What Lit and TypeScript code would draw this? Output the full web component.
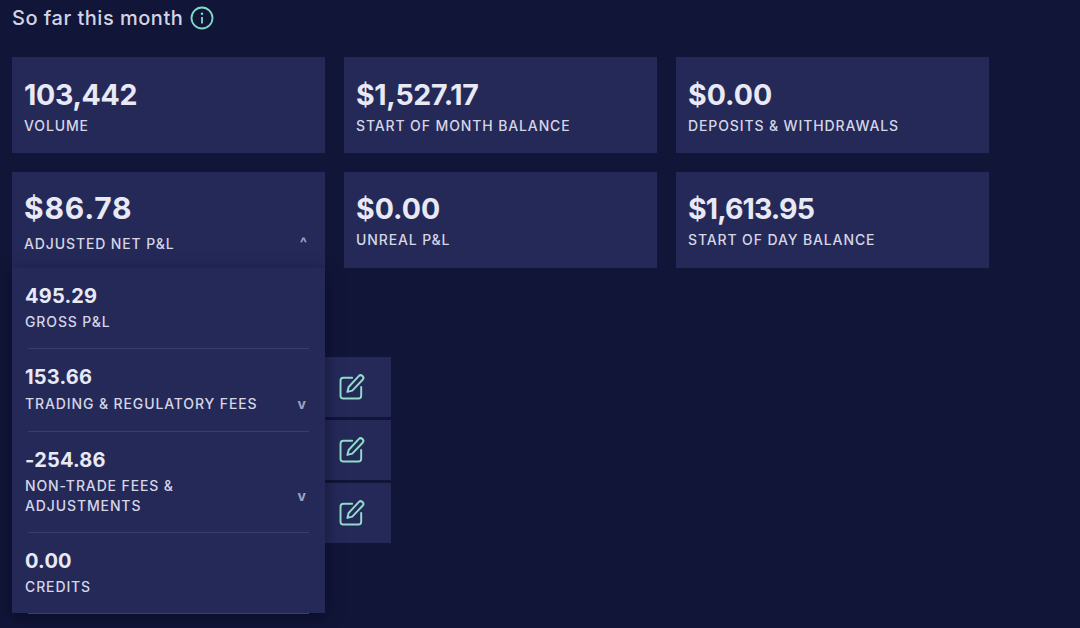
import { LitElement, html, css, svg } from "lit";
import { customElement } from "lit/decorators.js";

const editIcon = svg`<path d="M12.5 4.5H5.700a2.200 2.200 0 0 0-2.200 2.200v11.600a2.200 2.200 0 0 0 2.200 2.200h11.600a2.200 2.200 0 0 0 2.200-2.200v-6.800"/><path d="M17.600 3.200a2 2 0 0 1 3 2.800l-8 8.400-3.800 1 1-3.800z"/>`;

@customElement("app-root")
export class AppRoot extends LitElement {
  static styles = css`
    :host {
      display: block;
      width: 1080px;
      height: 628px;
      overflow: hidden;
      background: #111538;
      color: #e6e7f2;
      font-family: Inter, "Noto Sans", "Liberation Sans", sans-serif;
    }
    .page { padding: 5px 12px 0; }
    .title {
      display: flex;
      align-items: center;
      gap: 7px;
      height: 26px;
      font-size: 20px;
      letter-spacing: 0.5px;
      font-weight: 500;
      color: #d3d4e3;
    }
    .info { width: 24px; height: 24px; fill: none; stroke: #7fdcc4; stroke-width: 1.800; }
    .info .dot { fill: #7fdcc4; stroke: none; }
    .grid {
      display: grid;
      grid-template-columns: repeat(3, 313px);
      column-gap: 19px;
      row-gap: 19px;
      margin-top: 26px;
    }
    .card {
      position: relative;
      box-sizing: border-box;
      height: 96px;
      padding: 19px 12px 0;
      background: #252958;
    }
    .card.top { padding-top: 20px; }
    .value {
      font-size: 28.500px;
      line-height: 35px;
      font-weight: 700;
      color: #e8e9f4;
    }
    .value.tight { letter-spacing: -0.3px; }
    .value.tighter { letter-spacing: -0.9px; }
    .value.large { font-size: 30px; letter-spacing: 0.8px; }
    .label {
      font-size: 14px;
      line-height: 20px;
      font-weight: 500;
      letter-spacing: 0.88px;
      color: #d5d6e6;
      margin-top: 4px;
    }
    .label-row {
      display: flex;
      align-items: center;
      justify-content: space-between;
      margin-top: 8px;
    }
    .label-row .label { margin-top: 0; }
    .caret {
      flex: none;
      font-size: 15px;
      line-height: 20px;
      font-weight: 700;
      color: #a0a2c4;
      padding-right: 6px;
      margin-top: -2px;
    }
    .menu {
      position: absolute;
      top: 96px;
      left: 0;
      width: 313px;
      box-sizing: border-box;
      height: 345px;
      background: #252958;
      padding: 0 16px 0 13px;
      box-shadow: 0 4px 14px rgba(5, 7, 25, 0.55);
      z-index: 2;
    }
    .item { padding: 15px 0 17px; }
    .item.tall { padding-bottom: 16px; }
    .item.last { padding-bottom: 16px; }
    .item.first { padding-bottom: 16px; }
    .item .value { font-size: 20px; line-height: 26px; letter-spacing: 0.2px; }
    .item .label-row { margin-top: 3px; }
    .item.caret-row .label-row { margin-top: 4px; }
    .item .caret { padding-right: 3px; font-size: 14px; margin-top: -1px; }
    .item .wrap { max-width: 170px; }
    .rule { height: 1px; margin-left: 3px; background: #3a3e6d; }
    .rows {
      display: flex;
      flex-direction: column;
      gap: 3px;
      margin-top: 89px;
      width: 379px;
    }
    .row {
      display: flex;
      justify-content: flex-end;
      align-items: center;
      height: 60px;
      background: #252958;
      padding-right: 24px;
      box-sizing: border-box;
    }
    .edit {
      width: 31px;
      height: 31px;
      fill: none;
      stroke: #93dccb;
      stroke-width: 1.500;
      stroke-linejoin: round;
      stroke-linecap: round;
    }
  `;

  private card(value: string, label: string, top = false, cls = "") {
    return html`<div class="card ${top ? "top" : ""}">
      <div class="value ${cls}">${value}</div>
      <div class="label">${label}</div>
    </div>`;
  }

  private item(value: string, label: string, cls = "", caret = false, wrap = false) {
    return html`<div class="item ${cls}">
      <div class="value">${value}</div>
      <div class="label-row">
        <div class="label ${wrap ? "wrap" : ""}">${label}</div>
        ${caret ? html`<span class="caret">v</span>` : null}
      </div>
    </div>`;
  }

  render() {
    return html`<div class="page">
      <div class="title">
        <span>So far this month</span>
        <svg class="info" viewBox="0 0 24 24">
          <circle cx="12" cy="12" r="10.500" />
          <circle class="dot" cx="12" cy="7.800" r="1.200" />
          <path d="M12 11v6.500" />
        </svg>
      </div>
      <div class="grid">
        ${this.card("103,442", "VOLUME", true, "tight")}
        ${this.card("$1,527.17", "START OF MONTH BALANCE", true, "tight")}
        ${this.card("$0.00", "DEPOSITS & WITHDRAWALS", true)}
        <div class="card">
          <div class="value large">$86.78</div>
          <div class="label-row">
            <div class="label">ADJUSTED NET P&amp;L</div>
            <span class="caret">^</span>
          </div>
          <div class="menu">
            ${this.item("495.29", "GROSS P&L", "first")}
            <div class="rule"></div>
            ${this.item("153.66", "TRADING & REGULATORY FEES", "caret-row", true)}
            <div class="rule"></div>
            ${this.item("-254.86", "NON-TRADE FEES & ADJUSTMENTS", "tall", true, true)}
            <div class="rule"></div>
            ${this.item("0.00", "CREDITS", "last")}
            <div class="rule"></div>
          </div>
        </div>
        ${this.card("$0.00", "UNREAL P&L")}
        ${this.card("$1,613.95", "START OF DAY BALANCE", false, "tighter")}
      </div>
      <div class="rows">
        ${[0, 1, 2].map(
          () => html`<div class="row">
            <svg class="edit" viewBox="0 0 24 24">${editIcon}</svg>
          </div>`
        )}
      </div>
    </div>`;
  }
}
